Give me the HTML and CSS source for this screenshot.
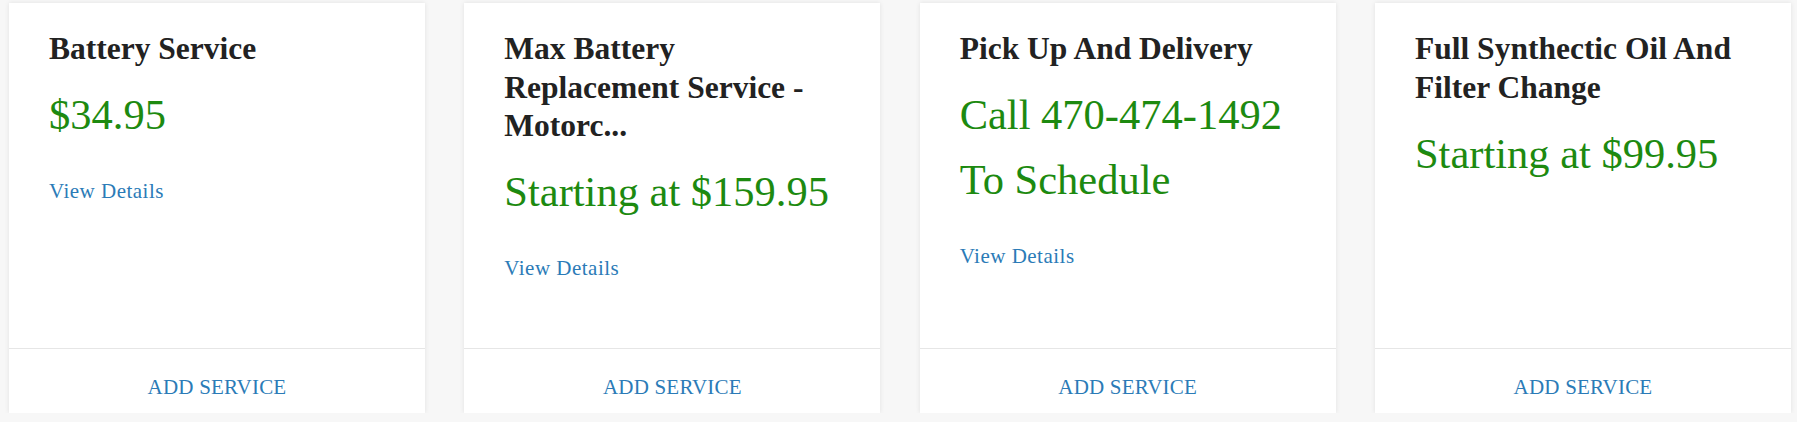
FILE: index.html
```html
<!DOCTYPE html>
<html>
<head>
<meta charset="utf-8">
<link rel="stylesheet" href="styles.css">
</head>
<body>
<div class="grid">
  <div class="card">
    <div class="card-body">
      <h3 class="title">Battery Service</h3>
      <div class="price">$34.95</div>
      <a class="details">View Details</a>
    </div>
    <div class="card-foot"><a class="add">ADD SERVICE</a></div>
  </div>
  <div class="card">
    <div class="card-body">
      <h3 class="title">Max Battery Replacement Service - Motorc...</h3>
      <div class="price">Starting at $159.95</div>
      <a class="details">View Details</a>
    </div>
    <div class="card-foot"><a class="add">ADD SERVICE</a></div>
  </div>
  <div class="card">
    <div class="card-body">
      <h3 class="title">Pick Up And Delivery</h3>
      <div class="price">Call 470-474-1492 To Schedule</div>
      <a class="details">View Details</a>
    </div>
    <div class="card-foot"><a class="add">ADD SERVICE</a></div>
  </div>
  <div class="card">
    <div class="card-body">
      <h3 class="title">Full Synthectic Oil And Filter Change</h3>
      <div class="price">Starting at $99.95</div>
    </div>
    <div class="card-foot"><a class="add">ADD SERVICE</a></div>
  </div>
</div>
</body>
</html>
```
FILE: styles.css
```css
html, body {
  margin: 0;
  padding: 0;
  background: #f7f7f7;
  font-family: "Liberation Serif", "Times New Roman", serif;
}
.grid {
  display: grid;
  grid-template-columns: repeat(4, 416px);
  column-gap: 39.33px;
  padding: 3px 0 0 9px;
}
.card {
  background: #fff;
  height: 410px;
  display: flex;
  flex-direction: column;
  box-shadow: 0 0 5px rgba(0, 0, 0, 0.09);
}
.card-body {
  flex: 1;
  padding: 27px 40px 0 40px;
  display: flex;
  flex-direction: column;
  align-items: flex-start;
}
.title {
  margin: 0;
  font-size: 31.5px;
  line-height: 38.6px;
  font-weight: bold;
  color: #222;
}
.price {
  margin-top: 13.5px;
  font-size: 42.5px;
  line-height: 65px;
  color: #1d8a10;
}
.details {
  margin-top: 29px;
  font-size: 21px;
  line-height: 30px;
  letter-spacing: 0.5px;
  color: #2b7bb7;
}
.card-foot {
  border-top: 1px solid #e6e6e6;
  padding: 26px 0 14px;
  text-align: center;
}
.add {
  font-size: 21px;
  line-height: 24px;
  letter-spacing: 0.2px;
  color: #2b7bb7;
}
```
